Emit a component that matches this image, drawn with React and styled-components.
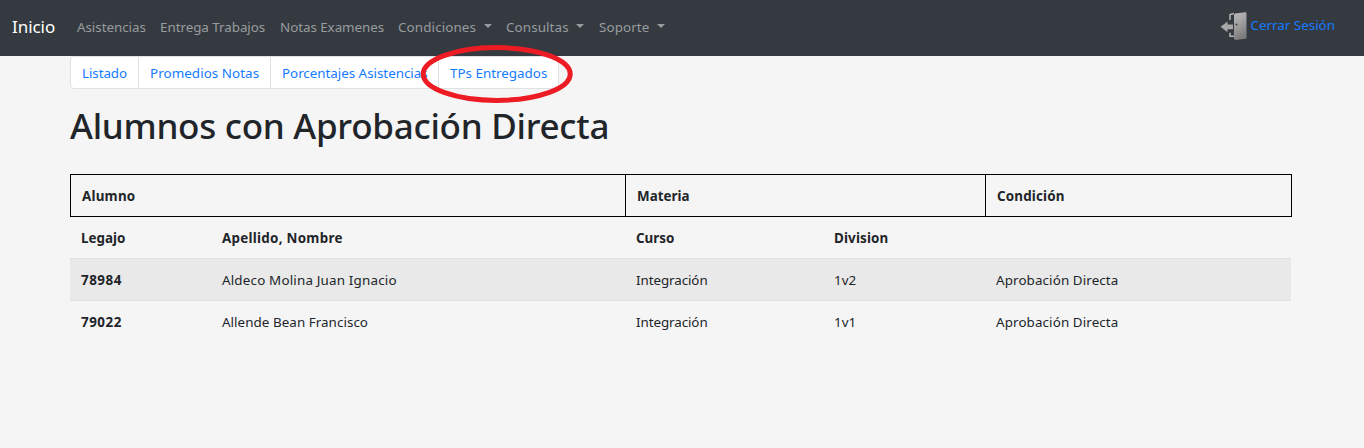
import React from "react";
import styled, { createGlobalStyle } from "styled-components";

const GlobalStyle = createGlobalStyle`
  * { box-sizing: border-box; }
  body {
    margin: 0;
    background: #f5f5f5;
    color: #212529;
    font: 400 13.4px/21px "Noto Sans", "Open Sans", sans-serif;
    overflow: hidden;
  }
`;

const Navbar = styled.nav`
  display: flex;
  align-items: center;
  height: 56px;
  padding: 0 29px 0 12px;
  background: #343a40;
  white-space: nowrap;
`;

const Brand = styled.a`
  width: 58px;
  margin-top: -3px;
  color: #fff;
  font-size: 17px;
`;

const NavLink = styled.a`
  display: flex;
  align-items: center;
  width: ${(p) => p.$width}px;
  margin-top: -2px;
  padding-left: 7px;
  color: #999c9f;
`;

const Caret = styled.span`
  margin: -2px 0 0 auto;
  margin-right: ${(p) => p.$end}px;
  border: 4px solid transparent;
  border-top-color: currentColor;
  border-bottom: 0;
`;

const Logout = styled.a`
  display: flex;
  align-items: center;
  gap: 3px;
  margin: -5px 0 0 auto;
  color: #147bff;
`;

const Container = styled.main`
  width: 1222px;
  margin-left: 70px;
`;

const Tabs = styled.div`
  display: flex;
  width: 489px;
  height: 33px;
  border: 1px solid #dee2e6;
  border-radius: 4px;
  background: #fff;
  overflow: hidden;
  white-space: nowrap;
`;

const Tab = styled.a`
  width: ${(p) => p.$width}px;
  padding: 6px 0 0 11px;
  color: #147bff;

  & + & { border-left: 1px solid #dee2e6; }
`;

const Title = styled.h1`
  margin: 16px 0 27px;
  font-size: 35px;
  font-weight: 500;
  line-height: 42px;
  white-space: nowrap;
`;

const Row = styled.div`
  display: grid;
  grid-template-columns: 141px 414px 198px 162px 306px;
  width: 1221px;
  height: 42px;
  padding-top: 11px;
  background: ${(p) => (p.$striped ? "#e9e9e9" : "transparent")};
  border-top: 1px solid #dee2e6;
`;

const SubHeadRow = styled(Row)`
  height: 41px;
  border-top: 0;
`;

const HeadRow = styled.div`
  display: grid;
  grid-template-columns: 555px 360px 307px;
  height: 43px;
  border: solid #000;
  border-width: 1px 1px 1px 0;
`;

const HeadCell = styled.div`
  padding: 11px 0 0 11px;
  border-left: 1px solid #000;
  font-weight: 700;
`;

const Cell = styled.div`
  padding-left: 11px;
  font-weight: ${(p) => (p.$bold ? 700 : 400)};
`;

const Text = styled.span`
  letter-spacing: ${(p) => p.$track || 0}px;
`;

const Marker = styled.svg`
  position: absolute;
  left: 419px;
  top: 44px;
`;

const DoorIcon = () => (
  <svg width="28" height="30" viewBox="0 0 28 30">
    <defs>
      <linearGradient id="door" x1="0" y1="0" x2="0.3" y2="1">
        <stop offset="0" stopColor="#bababa" />
        <stop offset="0.5" stopColor="#a0a0a0" />
        <stop offset="1" stopColor="#7c7c7c" />
      </linearGradient>
    </defs>
    <path d="M10 9V3.5L14 2.6M10 21.8v3.4h4" fill="none" stroke="#b4b4b4" strokeWidth="1.5" />
    <path d="M14 3.4 15 2.6 25 1.3Q26.5 1.2 26.5 2.6V26.4Q26.5 27.6 25.5 27.8L15.5 28.9 14 28Z" fill="url(#door)" />
    <path d="M0.6 15.7 7.5 10.5v2.9H13v4.9H7.5V21.2Z" fill="#a8a8a8" />
    <circle cx="16.5" cy="13.5" r="1" fill="#3a3a3a" />
  </svg>
);

export default function App() {
  return (
    <>
      <GlobalStyle />
      <Navbar>
        <Brand><Text $track={-0.05}>Inicio</Text></Brand>
        <NavLink $width={83}><Text $track={-0.05}>Asistencias</Text></NavLink>
        <NavLink $width={120}><Text $track={-0.04}>Entrega Trabajos</Text></NavLink>
        <NavLink $width={118}><Text $track={-0.05}>Notas Examenes</Text></NavLink>
        <NavLink $width={108}><Text $track={0.12}>Condiciones</Text><Caret $end={7} /></NavLink>
        <NavLink $width={93}><Text $track={0.1}>Consultas</Text><Caret $end={8} /></NavLink>
        <NavLink $width={81}><Text $track={0.1}>Soporte</Text><Caret $end={8} /></NavLink>
        <Logout><DoorIcon /><Text>Cerrar Sesión</Text></Logout>
      </Navbar>
      <Container>
        <Tabs>
          <Tab $width={67}><Text $track={-0.08}>Listado</Text></Tab>
          <Tab $width={132}><Text $track={0.06}>Promedios Notas</Text></Tab>
          <Tab $width={168}><Text $track={-0.03}>Porcentajes Asistencias</Text></Tab>
          <Tab $width={120}><Text>TPs Entregados</Text></Tab>
        </Tabs>
        <Title><Text $track={-0.27}>Alumnos con Aprobación Directa</Text></Title>
        <HeadRow>
          <HeadCell><Text $track={0.22}>Alumno</Text></HeadCell>
          <HeadCell><Text>Materia</Text></HeadCell>
          <HeadCell><Text $track={0.17}>Condición</Text></HeadCell>
        </HeadRow>
        <SubHeadRow>
          <Cell $bold><Text>Legajo</Text></Cell>
          <Cell $bold><Text $track={0.27}>Apellido, Nombre</Text></Cell>
          <Cell $bold><Text>Curso</Text></Cell>
          <Cell $bold><Text $track={0.15}>Division</Text></Cell>
        </SubHeadRow>
        <Row $striped>
          <Cell $bold><Text $track={0.5}>78984</Text></Cell>
          <Cell><Text $track={0.18}>Aldeco Molina Juan Ignacio</Text></Cell>
          <Cell><Text $track={-0.08}>Integración</Text></Cell>
          <Cell><Text>1v2</Text></Cell>
          <Cell><Text $track={0.11}>Aprobación Directa</Text></Cell>
        </Row>
        <Row>
          <Cell $bold><Text $track={0.5}>79022</Text></Cell>
          <Cell><Text $track={0.05}>Allende Bean Francisco</Text></Cell>
          <Cell><Text $track={-0.08}>Integración</Text></Cell>
          <Cell><Text>1v1</Text></Cell>
          <Cell><Text $track={0.11}>Aprobación Directa</Text></Cell>
        </Row>
      </Container>
      <Marker width="156" height="62" viewBox="0 0 156 62">
        <ellipse cx="77.7" cy="30" rx="73.5" ry="26.4" fill="none" stroke="#ed1c24" strokeWidth="5" />
      </Marker>
    </>
  );
}
